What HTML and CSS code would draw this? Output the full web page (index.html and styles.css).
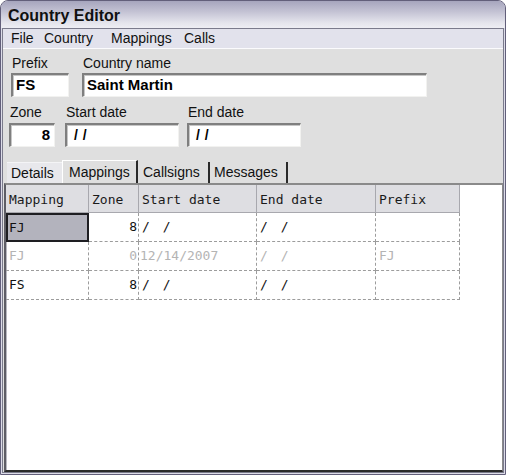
FILE: index.html
```html
<!DOCTYPE html>
<html>
<head>
<meta charset="utf-8">
<link rel="stylesheet" href="styles.css">
</head>
<body>
<div class="window">
  <div class="titlebar">Country Editor</div>
  <div class="frame">
    <div class="client">
      <div class="menubar">
        <span class="menu-item">File</span>
        <span class="menu-item">Country</span>
        <span class="menu-item">Mappings</span>
        <span class="menu-item">Calls</span>
      </div>
      <div class="form">
        <div class="row row-1">
          <div class="field f-prefix">
            <label class="lbl">Prefix</label>
            <div class="input">FS</div>
          </div>
          <div class="field f-name">
            <label class="lbl">Country name</label>
            <div class="input">Saint Martin</div>
          </div>
        </div>
        <div class="row row-2">
          <div class="field f-zone">
            <label class="lbl">Zone</label>
            <div class="input right">8</div>
          </div>
          <div class="field f-date">
            <label class="lbl">Start date</label>
            <div class="input date">/ /</div>
          </div>
          <div class="field f-date f-end">
            <label class="lbl">End date</label>
            <div class="input date">/ /</div>
          </div>
        </div>
      </div>
      <div class="tabs">
        <div class="tab t-details">Details</div>
        <div class="tab t-active">Mappings</div>
        <div class="tab t-calls">Callsigns</div>
        <div class="tab t-msgs">Messages</div>
      </div>
      <div class="gridwrap">
        <div class="grid">
          <div class="hc">Mapping</div>
          <div class="hc">Zone</div>
          <div class="hc">Start date</div>
          <div class="hc">End date</div>
          <div class="hc">Prefix</div>

          <div class="c sel">FJ</div>
          <div class="c num">8</div>
          <div class="c">/<span class="sp"></span>/</div>
          <div class="c">/<span class="sp"></span>/</div>
          <div class="c"></div>

          <div class="c dis">FJ</div>
          <div class="c num dis">0</div>
          <div class="c dis tight">12/14/2007</div>
          <div class="c dis">/<span class="sp"></span>/</div>
          <div class="c dis">FJ</div>

          <div class="c">FS</div>
          <div class="c num">8</div>
          <div class="c">/<span class="sp"></span>/</div>
          <div class="c">/<span class="sp"></span>/</div>
          <div class="c"></div>
        </div>
      </div>
    </div>
  </div>
</div>
</body>
</html>
```
FILE: styles.css
```css
* { box-sizing: border-box; }
html, body { margin: 0; padding: 0; background: #ffffff; }
body { font-family: "Liberation Sans", Arial, sans-serif; font-size: 14px; color: #000; }

.window {
  width: 506px;
  height: 475px;
  border: 1px solid #625f7a;
  border-radius: 8px 8px 0 0;
  background: #d2d2de;
  display: flex;
  flex-direction: column;
  overflow: hidden;
}
.titlebar {
  height: 27px;
  flex: none;
  padding-left: 7px;
  font-weight: bold;
  font-size: 16px;
  line-height: 29px;
  color: #101010;
  background: linear-gradient(to bottom, #a6a5bd 0%, #c4c3d4 40%, #e4e4ec 80%, #eeeef4 100%);
}
.frame {
  flex: 1;
  display: flex;
  flex-direction: column;
  padding: 0 1px 1px 1px;
  background: #dcdce8;
}
.client {
  flex: 1;
  display: flex;
  flex-direction: column;
  border: 1px solid #7b7b8c;
  background: #dfdfdf;
}
.menubar {
  height: 20px;
  flex: none;
  display: grid;
  grid-template-columns: 33px 67px 73px auto;
  padding-left: 8px;
  background: #e2e2ec;
  border-bottom: 1px solid #fbfbfd;
  line-height: 19px;
  color: #111;
}

.form {
  padding-top: 6px;
  display: flex;
  flex-direction: column;
  gap: 7px;
}
.row { display: flex; }
.row-1 { padding-left: 8px; gap: 13px; }
.row-2 { padding-left: 6px; gap: 10px; }
.field { display: flex; flex-direction: column; }
.lbl { height: 16px; line-height: 16px; padding-left: 1px; margin-bottom: 2px; color: #111; }
.row-2 .lbl { margin-bottom: 3px; }
.f-prefix { width: 58px; }
.f-name { width: 345px; }
.f-zone { width: 46px; }
.f-date { width: 114px; }
.f-end { margin-left: -2px; }
.input {
  height: 24px;
  background: #ffffff;
  border-top: 2px solid #7f7f7f;
  border-left: 2px solid #7f7f7f;
  border-right: 1px solid #f2f2f0;
  border-bottom: 1px solid #f2f2f0;
  box-shadow: inset 1px 1px 0 #c6c6c6;
  font-weight: bold;
  font-size: 15px;
  line-height: 20px;
  padding-left: 3px;
}
.input.right { text-align: right; padding-right: 4px; }
.input.date { padding-left: 7px; font-size: 14px; word-spacing: 1px; }

.tabs {
  margin-top: 13px;
  height: 23px;
  padding-left: 4px;
  display: flex;
  align-items: flex-end;
}
.tab {
  height: 21px;
  line-height: 20px;
  padding: 0 5px;
  color: #111;
  border-right: 2px solid #2a2a2a;
}
.t-details { width: 55px; padding-left: 4px; background: #e8e8ec; border-right: none; border-top: 1px solid #f4f4f6; }
.t-active {
  height: 23px;
  width: 76px;
  padding-left: 6px;
  line-height: 22px;
  background: #dfdfdf;
  border-left: 1px solid #ffffff;
  border-top: 1px solid #ffffff;
  border-right: 2px solid #2a2a2a;
}
.t-calls { width: 72px; padding-left: 5px; }
.t-msgs { width: 78px; padding-left: 4px; }

.gridwrap {
  flex: 1;
  margin: 0 0 0 1px;
  background: #ffffff;
  border-top: 2px solid #8a8a8a;
  border-left: 2px solid #5e5e66;
  border-right: 1px solid #8a8a8a;
  border-bottom: 2px solid #2a2a2a;
  box-shadow: inset 1px 0 0 #b8b8c0;
}
.grid {
  display: grid;
  grid-template-columns: 83px 50px 118px 119px 84px;
  grid-template-rows: 28px 29px 29px 29px;
  width: 454px;
  font-family: "DejaVu Sans Mono", "Liberation Mono", monospace;
  font-size: 13px;
}
.hc {
  background: #dedee2;
  border-right: 1px solid #a8a8ae;
  border-bottom: 1px solid #a8a8ae;
  padding-left: 3px;
  line-height: 29px;
  color: #1a1a1a;
}
.c {
  border-right: 1px dashed #9c9c9c;
  border-bottom: 1px dashed #9c9c9c;
  padding-left: 3px;
  line-height: 28px;
  color: #111;
  white-space: pre;
}
.c .sp { display: inline-block; width: 13px; }
.c.num { text-align: right; padding-right: 1px; padding-left: 0; }
.c.dis { color: #b4b4b4; }
.c.tight { padding-left: 1px; }
.c.sel {
  background: #b3b3bd;
  border: 2px solid #1e1e22;
  padding-left: 1px;
  line-height: 25px;
}
```
